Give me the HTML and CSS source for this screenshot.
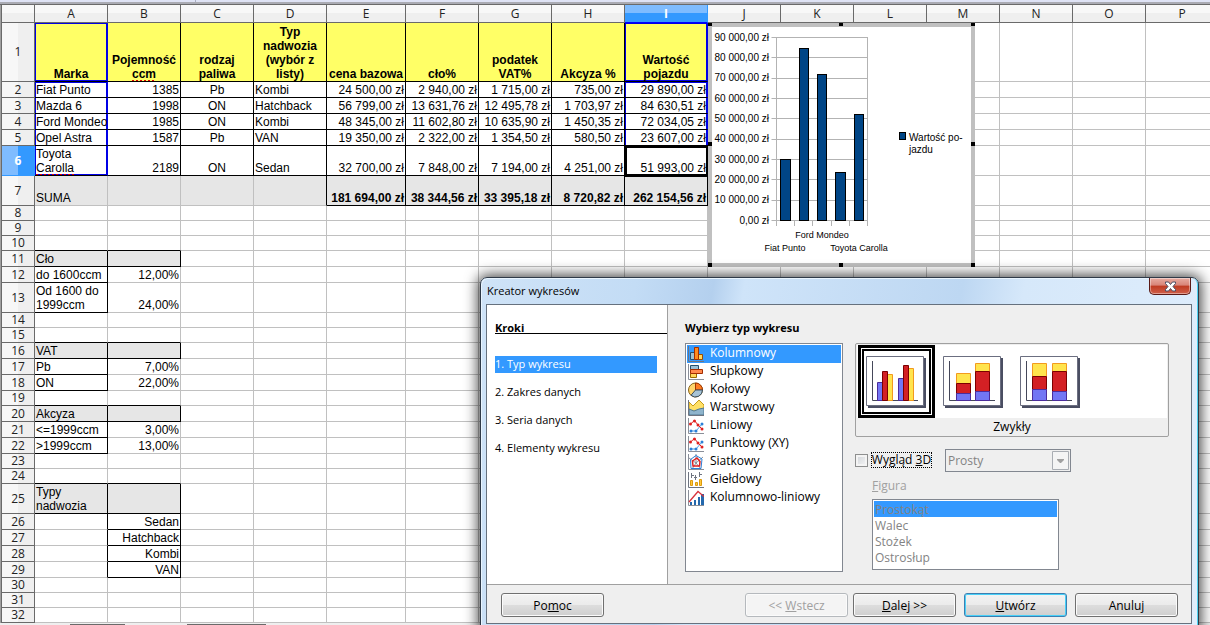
FILE: index.html
```html
<!DOCTYPE html>
<html lang="pl">
<head>
<meta charset="utf-8">
<title>Arkusz - Kreator wykresów</title>
<link rel="stylesheet" href="styles.css">
</head>
<body>
<div class="app">
<div class="formula-edge"><span></span></div>
<main class="sheet">
<table class="grid">
<colgroup><col class="c-head"><col><col><col><col><col class="c-price"><col><col><col><col class="c-value"><col><col><col><col><col><col><col></colgroup>
<thead>
<tr><th></th><th>A</th><th>B</th><th>C</th><th>D</th><th>E</th><th>F</th><th>G</th><th>H</th><th class="active">I</th><th>J</th><th>K</th><th>L</th><th>M</th><th>N</th><th>O</th><th>P</th></tr>
</thead>
<tbody>
<tr class="titles"><th>1</th><td class="k range">Marka</td><td class="k">Pojemność<br><span class="typo">ccm</span></td><td class="k">rodzaj<br>paliwa</td><td class="k">Typ<br>nadwozia<br>(wybór z<br>listy)</td><td class="k">cena bazowa</td><td class="k">cło%</td><td class="k">podatek<br>VAT%</td><td class="k">Akcyza %</td><td class="k range">Wartość<br>pojazdu</td><td></td><td></td><td></td><td></td><td></td><td></td><td></td></tr>
<tr><th>2</th><td class="k side top">Fiat Punto</td><td class="k r">1385</td><td class="k c">Pb</td><td class="k">Kombi</td><td class="k r">24 500,00 zł</td><td class="k r">2 940,00 zł</td><td class="k r">1 715,00 zł</td><td class="k r">735,00 zł</td><td class="k r side top">29 890,00 zł</td><td></td><td></td><td></td><td></td><td></td><td></td><td></td></tr>
<tr><th>3</th><td class="k side">Mazda 6</td><td class="k r">1998</td><td class="k c">ON</td><td class="k">Hatchback</td><td class="k r">56 799,00 zł</td><td class="k r">13 631,76 zł</td><td class="k r">12 495,78 zł</td><td class="k r">1 703,97 zł</td><td class="k r side">84 630,51 zł</td><td></td><td></td><td></td><td></td><td></td><td></td><td></td></tr>
<tr><th>4</th><td class="k side">Ford Mondeo</td><td class="k r">1985</td><td class="k c">ON</td><td class="k">Kombi</td><td class="k r">48 345,00 zł</td><td class="k r">11 602,80 zł</td><td class="k r">10 635,90 zł</td><td class="k r">1 450,35 zł</td><td class="k r side">72 034,05 zł</td><td></td><td></td><td></td><td></td><td></td><td></td><td></td></tr>
<tr><th>5</th><td class="k side">Opel Astra</td><td class="k r">1587</td><td class="k c">Pb</td><td class="k">VAN</td><td class="k r">19 350,00 zł</td><td class="k r">2 322,00 zł</td><td class="k r">1 354,50 zł</td><td class="k r">580,50 zł</td><td class="k r side">23 607,00 zł</td><td></td><td></td><td></td><td></td><td></td><td></td><td></td></tr>
<tr class="tall"><th class="active">6</th><td class="k side last">Toyota<br><span class="typo">Carolla</span></td><td class="k r">2189</td><td class="k c">ON</td><td class="k">Sedan</td><td class="k r">32 700,00 zł</td><td class="k r">7 848,00 zł</td><td class="k r">7 194,00 zł</td><td class="k r">4 251,00 zł</td><td class="k r cursor">51 993,00 zł</td><td></td><td></td><td></td><td></td><td></td><td></td><td></td></tr>
<tr class="tall"><th>7</th><td class="g">SUMA</td><td class="g"></td><td class="g"></td><td class="g kr"></td><td class="g k r b">181 694,00 zł</td><td class="g k r b">38 344,56 zł</td><td class="g k r b">33 395,18 zł</td><td class="g k r b">8 720,82 zł</td><td class="g k r b">262 154,56 zł</td><td></td><td></td><td></td><td></td><td></td><td></td><td></td></tr>
<tr class="low"><th>8</th><td></td><td></td><td></td><td></td><td></td><td></td><td></td><td></td><td></td><td></td><td></td><td></td><td></td><td></td><td></td><td></td></tr>
<tr class="low"><th>9</th><td></td><td></td><td></td><td></td><td></td><td></td><td></td><td></td><td></td><td></td><td></td><td></td><td></td><td></td><td></td><td></td></tr>
<tr class="low"><th>10</th><td class="kb"></td><td class="kb"></td><td></td><td></td><td></td><td></td><td></td><td></td><td></td><td></td><td></td><td></td><td></td><td></td><td></td><td></td></tr>
<tr><th>11</th><td class="g k">Cło</td><td class="g k"></td><td></td><td></td><td></td><td></td><td></td><td></td><td></td><td></td><td></td><td></td><td></td><td></td><td></td><td></td></tr>
<tr><th>12</th><td class="k">do 1600ccm</td><td class="r">12,00%</td><td></td><td></td><td></td><td></td><td></td><td></td><td></td><td></td><td></td><td></td><td></td><td></td><td></td><td></td></tr>
<tr class="tall"><th>13</th><td class="k">Od 1600 do<br>1999ccm</td><td class="r">24,00%</td><td></td><td></td><td></td><td></td><td></td><td></td><td></td><td></td><td></td><td></td><td></td><td></td><td></td><td></td></tr>
<tr class="low"><th>14</th><td></td><td></td><td></td><td></td><td></td><td></td><td></td><td></td><td></td><td></td><td></td><td></td><td></td><td></td><td></td><td></td></tr>
<tr class="low"><th>15</th><td class="kb"></td><td class="kb"></td><td></td><td></td><td></td><td></td><td></td><td></td><td></td><td></td><td></td><td></td><td></td><td></td><td></td><td></td></tr>
<tr><th>16</th><td class="g k">VAT</td><td class="g k"></td><td></td><td></td><td></td><td></td><td></td><td></td><td></td><td></td><td></td><td></td><td></td><td></td><td></td><td></td></tr>
<tr><th>17</th><td class="k">Pb</td><td class="r">7,00%</td><td></td><td></td><td></td><td></td><td></td><td></td><td></td><td></td><td></td><td></td><td></td><td></td><td></td><td></td></tr>
<tr><th>18</th><td class="k">ON</td><td class="r">22,00%</td><td></td><td></td><td></td><td></td><td></td><td></td><td></td><td></td><td></td><td></td><td></td><td></td><td></td><td></td></tr>
<tr class="low"><th>19</th><td class="kb"></td><td class="kb"></td><td></td><td></td><td></td><td></td><td></td><td></td><td></td><td></td><td></td><td></td><td></td><td></td><td></td><td></td></tr>
<tr><th>20</th><td class="g k">Akcyza</td><td class="g k"></td><td></td><td></td><td></td><td></td><td></td><td></td><td></td><td></td><td></td><td></td><td></td><td></td><td></td><td></td></tr>
<tr><th>21</th><td class="k">&lt;=1999ccm</td><td class="r">3,00%</td><td></td><td></td><td></td><td></td><td></td><td></td><td></td><td></td><td></td><td></td><td></td><td></td><td></td><td></td></tr>
<tr><th>22</th><td class="k">&gt;1999ccm</td><td class="r">13,00%</td><td></td><td></td><td></td><td></td><td></td><td></td><td></td><td></td><td></td><td></td><td></td><td></td><td></td><td></td></tr>
<tr class="low"><th>23</th><td></td><td></td><td></td><td></td><td></td><td></td><td></td><td></td><td></td><td></td><td></td><td></td><td></td><td></td><td></td><td></td></tr>
<tr class="low"><th>24</th><td class="kb"></td><td class="kb"></td><td></td><td></td><td></td><td></td><td></td><td></td><td></td><td></td><td></td><td></td><td></td><td></td><td></td><td></td></tr>
<tr class="tall"><th>25</th><td class="g k">Typy<br>nadwozia</td><td class="g k"></td><td></td><td></td><td></td><td></td><td></td><td></td><td></td><td></td><td></td><td></td><td></td><td></td><td></td><td></td></tr>
<tr><th>26</th><td class="kr"></td><td class="k r">Sedan</td><td></td><td></td><td></td><td></td><td></td><td></td><td></td><td></td><td></td><td></td><td></td><td></td><td></td><td></td></tr>
<tr><th>27</th><td class="kr"></td><td class="k r">Hatchback</td><td></td><td></td><td></td><td></td><td></td><td></td><td></td><td></td><td></td><td></td><td></td><td></td><td></td><td></td></tr>
<tr><th>28</th><td class="kr"></td><td class="k r">Kombi</td><td></td><td></td><td></td><td></td><td></td><td></td><td></td><td></td><td></td><td></td><td></td><td></td><td></td><td></td></tr>
<tr><th>29</th><td class="kr"></td><td class="k r">VAN</td><td></td><td></td><td></td><td></td><td></td><td></td><td></td><td></td><td></td><td></td><td></td><td></td><td></td><td></td></tr>
<tr class="low"><th>30</th><td></td><td></td><td></td><td></td><td></td><td></td><td></td><td></td><td></td><td></td><td></td><td></td><td></td><td></td><td></td><td></td></tr>
<tr class="low"><th>31</th><td></td><td></td><td></td><td></td><td></td><td></td><td></td><td></td><td></td><td></td><td></td><td></td><td></td><td></td><td></td><td></td></tr>
<tr class="low"><th>32</th><td></td><td></td><td></td><td></td><td></td><td></td><td></td><td></td><td></td><td></td><td></td><td></td><td></td><td></td><td></td><td></td></tr>
</tbody>
</table>
</main>
<div class="tabs"><span></span><span></span></div>

<svg class="chart" width="268" height="245" viewBox="707 22 268 245" role="img" aria-label="Wartość pojazdu">
  <rect x="710" y="25" width="263" height="240" fill="#fff" stroke="#c0c0c0" stroke-width="4"/>
  <path d="M771.5 37.5H867.5M771.5 57.5H867.5M771.5 78.500H867.5M771.5 98.500H867.5M771.5 118.500H867.5M771.5 139.500H867.5M771.5 159.500H867.5M771.5 179.500H867.5M771.5 200.500H867.5M771.5 220.500H867.5M776.5 37V226M867.5 37V226M794.500 220V226M812.500 220V226M831.500 220V226M849.500 220V226" fill="none" stroke="#b3b3b3"/>
  <g fill="#004586" stroke="#000">
    <rect x="780.5" y="159.500" width="10" height="61"/>
    <rect x="799.500" y="48.500" width="9" height="172"/>
    <rect x="817.500" y="74.500" width="9" height="146"/>
    <rect x="835.500" y="172.500" width="10" height="48"/>
    <rect x="854.500" y="114.500" width="9" height="106"/>
    <rect x="899.500" y="132.500" width="6" height="7"/>
  </g>
  <g class="axis">
    <text x="769" y="41">90 000,00 zł</text><text x="769" y="61">80 000,00 zł</text><text x="769" y="81">70 000,00 zł</text><text x="769" y="102">60 000,00 zł</text><text x="769" y="122">50 000,00 zł</text><text x="769" y="142">40 000,00 zł</text><text x="769" y="163">30 000,00 zł</text><text x="769" y="183">20 000,00 zł</text><text x="769" y="203">10 000,00 zł</text><text x="769" y="224">0,00 zł</text>
  </g>
  <g class="categories"><text x="822" y="238">Ford Mondeo</text><text x="785" y="251">Fiat Punto</text><text x="859" y="251">Toyota Carolla</text></g>
  <g class="legend"><text x="909" y="141">Wartość po-</text><text x="909" y="153">jazdu</text></g>
  <path d="M708 23h4v3h-4zM839 23h4v3h-4zM971 23h4v3h-4zM708 142h4v4h-4zM971 142h4v4h-4zM708 263h4v4h-4zM839 263h4v4h-4zM971 263h4v4h-4z" fill="#000"/>
</svg>

<section class="dialog" role="dialog" aria-labelledby="dlg-title">
  <header class="titlebar">
    <h1 id="dlg-title">Kreator wykresów</h1>
    <button class="close" aria-label="Zamknij"><svg width="13" height="11" viewBox="0 0 13 11"><path d="M1.500 1h3l2 2.500 2-2.500h3v1.500L9 5.500l2.500 3V10h-3l-2-2.500-2 2.500h-3V8.500L4 5.500l-2.500-3z" fill="#fff" stroke="#4a4f66"/></svg></button>
  </header>
  <div class="client">
    <div class="panes">
      <nav class="steps">
        <h2>Kroki</h2>
        <ol><li class="current">1. Typ wykresu</li><li>2. Zakres danych</li><li>3. Seria danych</li><li>4. Elementy wykresu</li></ol>
      </nav>
      <div class="page">
        <h2 id="type-label">Wybierz typ wykresu</h2>
        <div class="choices">
          <ul class="types" role="listbox" aria-labelledby="type-label">
            <li class="picked" role="option" aria-selected="true"><svg class="ico" viewBox="0 0 16 16"><path d="M.5 0v15.500H16" fill="none" stroke="#6e7480"/><path d="M2.500 6.500h4v7h-4z" fill="#9cc0d6" stroke="#25506e"/><path d="M10.500 8.500h4v5h-4z" fill="#ffd75c" stroke="#9a4c00"/><path d="M6.500 1.500h4v12h-4z" fill="#ff8a1e" stroke="#a32d00"/></svg>Kolumnowy</li>
            <li role="option"><svg class="ico" viewBox="0 0 16 16"><path d="M.5 0v15.500H16" fill="none" stroke="#8a8f99"/><path d="M2.500 1.500h8v4h-8z" fill="#9cc0d6" stroke="#25506e"/><path d="M2.500 9.500h6v4h-6z" fill="#ffd75c" stroke="#9a6c00"/><path d="M2.500 5.500h12v4h-12z" fill="#ff8a4e" stroke="#a32d00"/></svg>Słupkowy</li>
            <li role="option"><svg class="ico" viewBox="0 0 16 16"><circle cx="7.500" cy="8" r="7" fill="#ffd56b" stroke="#86611a"/><path d="M7.500 8V1a7 7 0 0 1 7 7z" fill="#ff7d22" stroke="#a33600"/><path d="M7.500 8h7a7 7 0 0 1-11.500 5.300z" fill="#a7c3d6" stroke="#3c5263"/></svg>Kołowy</li>
            <li role="option"><svg class="ico" viewBox="0 0 16 16"><path d="M1 2l4 4 6-6 5 5v10H1z" fill="#ffe066" stroke="#c69a18"/><path d="M1 9l5 2 5-2 5-1v7H1z" fill="#8fb4cc" stroke="#4e7893"/><path d="M.5 0v15.500H16" fill="none" stroke="#6e7480"/></svg>Warstwowy</li>
            <li role="option"><svg class="ico" viewBox="0 0 16 16"><path d="M.5 0v15.500H16" fill="none" stroke="#8a8f99"/><path d="M3 13h5l6-7" fill="none" stroke="#4d9be6"/><path d="M2.500 6L6.500 2.500 10 7l4 4" fill="none" stroke="#e02020"/><g fill="#e02020"><circle cx="2.500" cy="6" r="1.500"/><circle cx="6.500" cy="3" r="1.500"/><circle cx="10" cy="7" r="1.500"/><circle cx="14" cy="11" r="1.500"/></g><g fill="#2b7fd6"><circle cx="3" cy="13" r="1.500"/><circle cx="8" cy="13" r="1.500"/><circle cx="14" cy="6" r="1.500"/></g></svg>Liniowy</li>
            <li role="option"><svg class="ico" viewBox="0 0 16 16"><path d="M.5 0v15.500H16" fill="none" stroke="#8a8f99"/><path d="M3 13h5l6-7" fill="none" stroke="#4d9be6"/><path d="M2.500 6L6.500 2.500 10 7l4 4" fill="none" stroke="#e02020"/><g fill="#e02020"><circle cx="2.500" cy="6" r="1.500"/><circle cx="6.500" cy="3" r="1.500"/><circle cx="10" cy="7" r="1.500"/><circle cx="14" cy="11" r="1.500"/></g><g fill="#2b7fd6"><circle cx="3" cy="13" r="1.500"/><circle cx="8" cy="13" r="1.500"/><circle cx="14" cy="6" r="1.500"/></g></svg>Punktowy (XY)</li>
            <li role="option"><svg class="ico" viewBox="0 0 16 16"><path d="M.5 0v15.500H16M8 0v9M1 4l7 5 7-6M4 15l4-6 5 6" fill="none" stroke="#8a8f99"/><path d="M2.500 5.500L8 1.500l6 3.500-1 9.500H3z" fill="none" stroke="#2b7fd6"/><path d="M4.500 7L9 4l3 3.500-.5 4.500H5z" fill="none" stroke="#e02020" stroke-width="1.500"/></svg>Siatkowy</li>
            <li role="option"><svg class="ico" viewBox="0 0 16 16"><path d="M.5 0v15.500H16M3.500 1v5M3 3.500h3M7.500 3v5M6 5.500h3M11.500 0v5M11 2.500h3" fill="none" stroke="#6e7480"/><path d="M2.500 8.500h2v5h-2zM7.500 10.500h2v3h-2zM11.500 7.500h2v6h-2z" fill="#ffc93c" stroke="#dd9a0c"/></svg>Giełdowy</li>
            <li role="option"><svg class="ico" viewBox="0 0 16 16"><path d="M.5 0v15.500H16" fill="none" stroke="#8a8f99"/><path d="M2 12h2v3H2zM6 10h2v5H6zM10 7h2v8h-2zM13 4h3v11h-3z" fill="#2468ad"/><path d="M1 12l9-10.500 6 5" fill="none" stroke="#d8323c" stroke-width="1.300"/></svg>Kolumnowo-liniowy</li>
          </ul>
          <div class="options">
            <div class="variants">
              <div class="tiles">
                <button class="tile chosen" aria-label="Zwykły"><svg width="60" height="52" viewBox="0 0 60 52"><path d="M2 2h58v50H2z" fill="#4a4e62"/><path d="M.5.5h57v49H.5z" fill="#fff" stroke="#6b6e80"/><path d="M6.500 5v39.500H52" fill="none" stroke="#45485a"/><path d="M11.500 26.500h5v18h-5zM32.500 22.500h5v22h-5z" fill="#7276f4" stroke="#4b2c9c"/><path d="M21.500 18.500h5v26h-5zM42.500 12.500h5v32h-5z" fill="#ffe44d" stroke="#f29a1e"/><path d="M16.500 15.500h5v29h-5zM37.500 9.500h5v35h-5z" fill="#d32024" stroke="#7c0000"/></svg></button>
                <button class="tile" aria-label="Skumulowany"><svg width="60" height="52" viewBox="0 0 60 52"><path d="M2 2h58v50H2z" fill="#4a4e62"/><path d="M.5.5h57v49H.5z" fill="#fff" stroke="#6b6e80"/><path d="M6.500 5v39.500H52" fill="none" stroke="#45485a"/><path d="M13.500 17.500h14v10h-14zM32.500 7.500h14v8h-14z" fill="#ffe44d" stroke="#f29a1e"/><path d="M13.500 27.500h14v10h-14zM32.500 15.500h14v20h-14z" fill="#d32024" stroke="#7c0000"/><path d="M13.500 37.500h14v7h-14zM32.500 35.500h14v9h-14z" fill="#7276f4" stroke="#4b2c9c"/></svg></button>
                <button class="tile" aria-label="Skumulowany procentowo"><svg width="60" height="52" viewBox="0 0 60 52"><path d="M2 2h58v50H2z" fill="#4a4e62"/><path d="M.5.5h57v49H.5z" fill="#fff" stroke="#6b6e80"/><path d="M6.500 5v39.500H52" fill="none" stroke="#45485a"/><path d="M12.500 7.500h14v13h-14zM32.500 7.500h14v8h-14z" fill="#ffe44d" stroke="#f29a1e"/><path d="M12.500 20.500h14v13h-14zM32.500 15.500h14v20h-14z" fill="#d32024" stroke="#7c0000"/><path d="M12.500 33.500h14v11h-14zM32.500 35.500h14v9h-14z" fill="#7276f4" stroke="#4b2c9c"/></svg></button>
              </div>
              <p>Zwykły</p>
            </div>
            <div class="look">
              <input type="checkbox" id="look3d"><label for="look3d">Wygląd <u>3</u>D</label>
              <span class="combo"><select disabled aria-label="Schemat 3D"><option>Prosty</option></select><svg width="17" height="19" viewBox="0 0 17 19" aria-hidden="true"><path d="M.5.5h16v18H.5z" fill="#f4f4f4" stroke="#a9adb3"/><path d="M5 8h7v1l-3 3H8L5 9z" fill="#a0a0a0"/></svg></span>
            </div>
            <div class="shape">
              <label for="shape"><u>F</u>igura</label>
              <select id="shape" size="4" disabled><option selected>Prostokąt</option><option>Walec</option><option>Stożek</option><option>Ostrosłup</option></select>
            </div>
          </div>
        </div>
      </div>
    </div>
    <footer class="actions">
      <button class="help">Po<u>m</u>oc</button>
      <div class="pair"><button disabled>&lt;&lt; <u>W</u>stecz</button><button><u>D</u>alej &gt;&gt;</button></div>
      <button class="primary"><u>U</u>twórz</button>
      <button>Anuluj</button>
    </footer>
  </div>
</section>
</div>
</body>
</html>
```
FILE: styles.css
```css
* { box-sizing: border-box; }
body { margin: 0; font-family: "Open Sans", "Noto Sans", sans-serif; font-size: 12px; color: #000; }
h1, h2, p, ul, ol { margin: 0; padding: 0; font-size: 12px; list-style: none; }
button, select, input { font: inherit; color: inherit; margin: 0; }

.app { position: relative; height: 100vh; overflow: hidden; display: flex; flex-direction: column; background: #fff; }
.formula-edge { flex: none; height: 5px; background: #dfe3f5; border-bottom: 1px solid #6a6a6a; box-shadow: inset 0 -2px #aaabb3; }
.formula-edge span { display: block; width: 196px; height: 2px; border-right: 1px solid #a8acc0; }
.sheet { flex: 1; min-height: 0; overflow: hidden; border-left: 1px solid #a0a0a0; }

.grid { table-layout: fixed; width: 1218px; border-collapse: separate; border-spacing: 0; border-left: 1px solid #6a6a6a; font: 12px/14px "Liberation Sans", Arial, sans-serif; }
.grid col { width: 73px; }
.grid .c-head { width: 33px; }
.grid .c-price { width: 79px; }
.grid .c-value { width: 83px; }
.grid tr { height: 16px; }
.grid thead tr { height: 18px; }
.grid .titles { height: 59px; }
.grid .tall { height: 30px; }
.grid .low { height: 15px; }
.grid th { padding: 0; border: solid #6a6a6a; border-width: 0 1px 1px 0; background: linear-gradient(90deg, #f7f7f7 50%, #efefef 50%); font: 12px/14px "Open Sans", "Noto Sans", sans-serif; color: #222; }
.grid thead th { background: linear-gradient(#f8f8f8 50%, #efefef 50%); }
.grid th.active { background: linear-gradient(90deg, #7fbcff 50%, #3399ff 50%); border-color: #3399ff; color: #fff; font-weight: 700; }
.grid thead th.active { background: linear-gradient(#7fbcff 50%, #3399ff 50%); border-bottom-color: #0000ff; }
.grid td { padding: 0 1px; border: solid #c0c0c0; border-width: 0 1px 1px 0; vertical-align: bottom; white-space: nowrap; overflow: hidden; }
.grid td.k { border-color: #000; }
.grid td.kb { border-bottom-color: #000; }
.grid td.kr { border-right-color: #000; }
.grid .r { text-align: right; }
.grid .c { text-align: center; }
.grid .b { font-weight: 700; }
.grid .g { background: #e6e6e6; }
.titles td.k { background: #ffff66; font-weight: 700; text-align: center; }
.titles td.range { border-right-color: #0000e6; box-shadow: inset 0 0 0 1px #0000e6; }
.grid td.side { border-right-color: #0000e6; box-shadow: inset 1px 0 #0000e6, inset -1px 0 #0000e6; }
.grid td.top { box-shadow: inset 1px 1px #0000e6, inset -1px 0 #0000e6; }
.grid td.last { box-shadow: inset 1px -1px #0000e6, inset -1px 0 #0000e6; }
.grid td.cursor { outline: 3px solid #000; outline-offset: -2px; }
.typo { background: repeating-linear-gradient(90deg, #e00000 0 2px, transparent 2px 4px) bottom / 100% 1px no-repeat; }

.tabs { flex: none; display: flex; gap: 62px; height: 2px; padding-left: 70px; background: #efefef; }
.tabs span { width: 55px; border-bottom: 1px solid #6a6a6a; }
.tabs span + span { width: 79px; }

.chart { position: absolute; left: 707px; top: 22px; font: 10px "Liberation Sans", Arial, sans-serif; }
.axis { text-anchor: end; }
.categories { text-anchor: middle; font-size: 9px; }

.dialog { position: absolute; left: 480px; top: 277px; width: 719px; padding: 0 7px 6px 6px; border: 1px solid #2f3a48; border-radius: 7px 7px 0 0; background: linear-gradient(100deg, #cfe3f7 0, #c3dcf5 20%, #b4d0ee 30%, #cfe4f9 34%, #bdd7f2 62%, #d6e8fa 70%, #e0eefc 100%); box-shadow: inset 1px 1px #e9f5ff, inset -1px 0 #4fd2f2, 0 0 14px 2px rgba(0, 0, 0, .75); }
.titlebar { display: flex; justify-content: space-between; align-items: flex-start; height: 26px; }
.titlebar h1 { font-size: 11px; font-weight: 400; line-height: 26px; }
.close { display: flex; align-items: center; justify-content: center; width: 42px; height: 17px; padding: 0; border: 1px solid #5a1a16; border-top: 0; border-radius: 0 0 5px 5px; background: linear-gradient(#e8aca2 0, #d88478 45%, #bf3a22 50%, #d0604a 100%); box-shadow: inset 0 0 0 1px rgba(255, 255, 255, .4); }

.client { border: 1px solid #66717e; background: #efefef; margin: 0 -1px; }
.panes { display: flex; height: 280px; border-bottom: 1px solid #a0a0a0; }
.steps { width: 181px; padding: 14px 0 0 8px; background: #fff; border-right: 1px solid #a0a0a0; }
.steps h2 { height: 15px; font-size: 11px; line-height: 18px; border-bottom: 1px solid #000; text-decoration: underline; }
.steps ol { display: flex; flex-direction: column; gap: 11px; margin: 22px 10px 0 0; font-size: 11px; }
.steps li { height: 17px; line-height: 16px; }
.steps .current { background: #3399ff; color: #fff; }
.page { flex: 1; padding: 15px 22px 0 17px; }
.page h2 { font-size: 11px; line-height: 16px; }
.choices { display: flex; gap: 12px; margin-top: 7px; }
.types { width: 158px; height: 229px; padding: 1px; border: 1px solid #828790; background: #fff; }
.types li { display: flex; gap: 6px; height: 18px; padding-left: 1px; line-height: 16px; }
.types .picked { background: #3399ff; color: #fff; }
.ico { width: 16px; height: 16px; margin-top: 1px; background: #fff; }
.picked .ico { background: none; }
.options { flex: 1; }
.variants { height: 94px; padding: 1px; border: 1px solid #a0a0a0; border-radius: 2px; }
.tiles { display: flex; height: 73px; padding-left: 1px; background: #fff; }
.tile { width: 77px; padding: 0 0 0 8px; border: 0; background: #fff; text-align: left; line-height: 0; }
.tile svg { display: block; }
.chosen { padding: 0 0 0 5px; border: 3px solid #000; box-shadow: inset 0 0 0 1px #fff, inset 0 0 0 3px #000; }
.variants p { line-height: 17px; text-align: center; }
.look { display: flex; align-items: center; height: 24px; margin-top: 11px; }
.look input { appearance: none; width: 13px; height: 13px; border: 1px solid #8e8f8f; background: linear-gradient(135deg, #cfd3d8, #f6f6f6); box-shadow: inset 0 0 0 2px #f4f4f4; }
.look label { width: 61px; margin: 0 13px 0 3px; outline: 1px dotted #000; outline-offset: -1px; line-height: 16px; text-align: center; white-space: nowrap; }
.combo { position: relative; width: 126px; height: 23px; }
.combo select { appearance: none; display: block; width: 100%; height: 23px; padding: 0 2px; border: 1px solid #828790; border-radius: 0; opacity: 1; color: #838383; background: #efefef; }
.combo svg { position: absolute; right: 2px; top: 2px; pointer-events: none; }
.shape { display: flex; flex-direction: column; width: 187px; margin: 6px 0 0 17px; color: #a0a0a0; }
.shape label { margin-bottom: 5px; line-height: 16px; }
.shape select { height: 71px; padding: 1px; border: 1px solid #828790; border-radius: 0; background: #fff; opacity: 1; overflow: hidden; }
.shape option { min-height: 16px; height: 16px; padding: 0 1px; line-height: 16px; color: #838383; }
.shape option:checked { background: linear-gradient(#3399ff, #3399ff); color: #838383; }

.actions { display: flex; gap: 8px; padding: 8px 13px 6px 14px; }
.actions button { width: 103px; height: 24px; padding: 0; border: 1px solid #707070; border-radius: 3px; background: linear-gradient(#f3f3f3 0, #ebebeb 48%, #dddddd 50%, #cfcfcf 100%); box-shadow: inset 0 0 0 1px #fbfbfb; }
.actions .help { margin-right: auto; }
.actions .pair { display: flex; gap: 5px; }
.actions button:disabled { border-color: #b5b9bd; background: #f4f4f4; color: #a0a0a0; }
.actions .primary { border-color: #3c7fb1; box-shadow: inset 0 0 0 1px #48d0f8; }
```
